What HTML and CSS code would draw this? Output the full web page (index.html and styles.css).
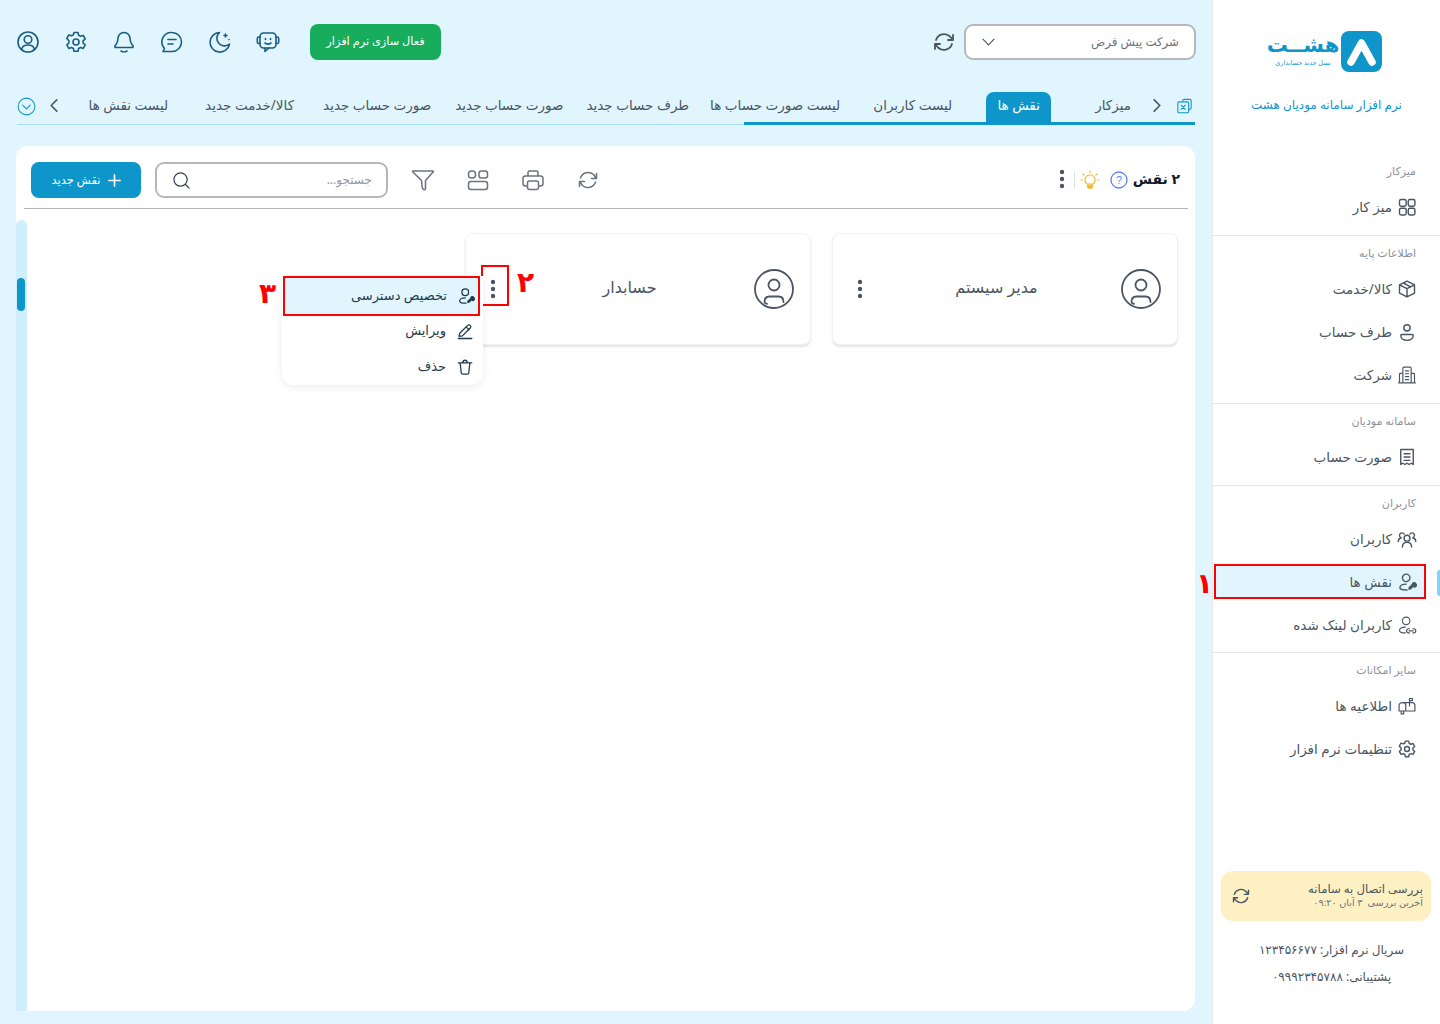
FILE: index.html
```html
<!DOCTYPE html>
<html lang="fa" dir="rtl">
<head>
<meta charset="utf-8">
<title>نرم افزار سامانه مودیان هشت</title>
<link rel="stylesheet" href="styles.css">
</head>
<body>
<svg class="defs" width="0" height="0" aria-hidden="true">
  <defs>
    <symbol id="i-refresh" viewBox="0 0 24 24"><path d="M21 5v5h-5M3 19v-5h5M4 10a8.500 8.500 0 0 1 14-3.500L21 10M20 14a8.500 8.500 0 0 1-14 3.500L3 14"/></symbol>
    <symbol id="i-user-key" viewBox="0 0 24 24"><circle cx="11" cy="7" r="4.500"/><path d="M11 14.500c-4.500 0-7.500 1.800-7.500 4s3 3 7.500 3h1"/><path class="fillc" d="M23 13.500a2.800 2.800 0 0 0-5.300 1l-4 4.200v2.500h2.500l.7-1.200 1.300-.3 1-1.700a2.800 2.800 0 0 0 3.800-4.500z"/></symbol>
    <symbol id="i-kebab" viewBox="0 0 6 20"><circle class="fillc" cx="3" cy="3" r="2.200"/><circle class="fillc" cx="3" cy="10" r="2.200"/><circle class="fillc" cx="3" cy="17" r="2.200"/></symbol>
    <symbol id="i-avatar" viewBox="0 0 40 40"><circle cx="20" cy="20" r="19"/><circle cx="20" cy="16" r="5.500"/><path d="M10.500 33c0-3.500 2-5.500 5-5.500h9c3 0 5 2 5 5.500"/><path d="M11 34l2 .8"/></symbol>
    <symbol id="i-gear" viewBox="0 0 24 24"><circle cx="12" cy="12" r="3"/><path d="M10 2.500h4l.6 2.800 1.900 1 2.700-.9 2 3.500-2.100 1.900v2.200l2.100 1.900-2 3.500-2.700-.9-1.900 1-.6 2.800h-4l-.6-2.800-1.900-1-2.700.9-2-3.500 2.100-1.900v-2.200L2.800 8.400l2-3.500 2.700.9 1.900-1z" stroke-linejoin="round"/></symbol>
  </defs>
</svg>
<div class="app">
  <aside class="sidebar">
    <div class="brand">
      <div class="logo">
        <svg class="logo-mark" viewBox="0 0 41 41"><rect width="41" height="41" rx="8" fill="#0e96cb"/><path d="M10 31 L20.500 12 L31 31" fill="none" stroke="#fff" stroke-width="7.500" stroke-linecap="round" stroke-linejoin="round"/></svg>
        <div class="logo-words"><span class="logo-name">هشــت</span><span class="logo-tag">نسل جدید حسابداری</span></div>
      </div>
      <p class="brand-title">نرم افزار سامانه مودیان هشت</p>
    </div>
    <nav class="nav">
      <section class="group">
        <h4 class="group-label">میزکار</h4>
        <a class="item"><svg class="ic" viewBox="0 0 24 24"><rect x="3" y="3" width="8" height="8" rx="2"/><rect x="13.500" y="3" width="8" height="8" rx="2"/><rect x="3" y="13.500" width="8" height="8" rx="2"/><rect x="13.500" y="13.500" width="8" height="8" rx="2"/></svg><span>میز کار</span></a>
      </section>
      <section class="group">
        <h4 class="group-label">اطلاعات پایه</h4>
        <a class="item"><svg class="ic" viewBox="0 0 24 24"><path d="M12 2.500l9 4.500v10l-9 4.500-9-4.500V7zM3 7l9 4.500L21 7M12 11.500v10M7.500 4.800l9 4.700"/></svg><span>کالا/خدمت</span></a>
        <a class="item"><svg class="ic" viewBox="0 0 24 24"><circle cx="12" cy="7" r="3.800"/><path d="M5.500 15h13c.5 0 1 .4 1 1 0 3.500-3 6-7.500 6s-7.500-2.500-7.500-6c0-.6.500-1 1-1z"/></svg><span>طرف حساب</span></a>
        <a class="item"><svg class="ic thin" viewBox="0 0 24 24"><path d="M7 21.500V4c0-1 .7-1.500 1.500-1.500h7c.8 0 1.500.5 1.500 1.500v17.500M3 21.500V11c0-.6.400-1 1-1h3M17 10h3c.6 0 1 .4 1 1v10.500M2 21.500h20M10 7h4M10 10.500h4M10 14h4M10 17.500h4"/></svg><span>شرکت</span></a>
      </section>
      <section class="group">
        <h4 class="group-label">سامانه مودیان</h4>
        <a class="item"><svg class="ic" viewBox="0 0 24 24"><path d="M4.500 3h15v18l-2.500-1.500L14.500 21 12 19.500 9.500 21 7 19.500 4.500 21zM8.500 8h7M8.500 12h7M8.500 16h7"/></svg><span>صورت حساب</span></a>
      </section>
      <section class="group short">
        <h4 class="group-label">کاربران</h4>
        <a class="item"><svg class="ic" viewBox="0 0 24 24"><circle cx="12" cy="11" r="3.500"/><path d="M6.500 21.500c0-3.500 2.500-5.500 5.500-5.500s5.500 2 5.500 5.500M8.500 6a3 3 0 1 0-3.500 4.500c-2 .6-3.500 2.200-3.500 4.500M15.500 6A3 3 0 1 1 19 10.500c2 .6 3.500 2.200 3.500 4.500"/></svg><span>کاربران</span></a>
        <a class="item active"><svg class="ic"><use href="#i-user-key"/></svg><span>نقش ها</span><i class="redbox"></i><b class="note note-1">۱</b></a>
        <a class="item"><svg class="ic thin" viewBox="0 0 24 24"><circle cx="11" cy="7" r="4.500"/><path d="M10 14.500c-4 0-7 1.800-7 4s3 3 7 3M15 16.500h-1a2.500 2.500 0 0 0 0 5h1M19 16.500h1a2.500 2.500 0 0 1 0 5h-1M14.500 19h5"/></svg><span>کاربران لینک شده</span></a>
      </section>
      <section class="group last">
        <h4 class="group-label">سایر امکانات</h4>
        <a class="item"><svg class="ic thin" viewBox="0 0 24 24"><path d="M7 8h11c2 0 3.500 1.500 3.500 3.500V18h-19v-6.500C2.500 9.500 4.500 8 7 8zM7 8c2 0 3.500 1.500 3.500 3.500V18M5 18v3.500h3V18M15 12V3h3.500v2.500H15"/></svg><span>اطلاعیه ها</span></a>
        <a class="item"><svg class="ic"><use href="#i-gear"/></svg><span>تنظیمات نرم افزار</span></a>
      </section>
    </nav>
    <div class="side-foot">
      <div class="check">
        <div class="check-text"><strong>بررسی اتصال به سامانه</strong><small>آخرین بررسی&nbsp; ۳ آبان ۰۹:۲۰</small></div>
        <svg class="ic"><use href="#i-refresh"/></svg>
      </div>
      <p class="foot-line">سریال نرم افزار: ۱۲۳۴۵۶۶۷۷</p>
      <p class="foot-line">پشتیبانی: ۰۹۹۹۲۳۴۵۷۸۸</p>
    </div>
  </aside>

  <main class="main">
    <header class="topbar">
      <div class="select"><span>شرکت پیش فرض</span><svg class="chev" viewBox="0 0 14 8"><path d="M1 1l6 6 6-6"/></svg></div>
      <svg class="top-refresh"><use href="#i-refresh"/></svg>
      <div class="top-actions">
        <button class="activate">فعال سازی نرم افزار</button>
        <svg class="tic" viewBox="0 0 24 24"><rect x="4" y="3" width="16" height="15" rx="3.500"/><path d="M4 7H2.800c-.8 0-1.500.7-1.500 1.500v3.500c0 .8.700 1.500 1.500 1.500H4M20 7h1.200c.8 0 1.500.7 1.500 1.500v3.500c0 .8-.7 1.500-1.500 1.500H20M9 18v3.500l4-3.500M9 13c1.700 1.300 4.300 1.300 6 0M9.500 8.500v1M14.500 8.500v1"/></svg>
        <svg class="tic" viewBox="0 0 24 24"><path d="M11.500 2.500A9.800 9.800 0 1 0 21.500 14a7.500 7.500 0 0 1-10-11.500zM17.500 4v3M16 5.500h3M21 9.500v.1"/></svg>
        <svg class="tic" viewBox="0 0 24 24"><path d="M12 2.500a9.500 9.500 0 0 1 0 19H3l1.500-3A9.500 9.500 0 0 1 12 2.500zM8 9.500h8M8 14h5"/></svg>
        <svg class="tic" viewBox="0 0 24 24"><path d="M12 2.500c-3.500 0-6 2.700-6 6 0 4-1.500 5.500-3 7.500-.5.700 0 1.500 1 1.500h16c1 0 1.500-.8 1-1.500-1.500-2-3-3.500-3-7.500 0-3.300-2.500-6-6-6zM9 21c1.500 1 4.500 1 6 0"/></svg>
        <svg class="tic"><use href="#i-gear"/></svg>
        <svg class="tic" viewBox="0 0 24 24"><circle cx="12" cy="12" r="10"/><circle cx="12" cy="9.500" r="3.800"/><path d="M5.500 19.500c.5-3 3-4.500 6.500-4.500s6 1.500 6.500 4.500"/></svg>
      </div>
    </header>

    <div class="tabs">
      <svg class="excel" viewBox="0 0 18 18"><path d="M7 3V2.500C7 1.700 7.700 1 8.500 1h7c.8 0 1.500.7 1.500 1.500v9c0 .8-.7 1.500-1.500 1.500H15"/><rect x="1" y="4" width="13" height="13" rx="1.500"/><path d="M5 8l5 5M10 8l-5 5"/></svg>
      <svg class="tab-chev" viewBox="0 0 8 14"><path d="M1 1l6 6-6 6"/></svg>
      <a class="tab t1">میزکار</a>
      <a class="tab on t2">نقش ها</a>
      <a class="tab t3">لیست کاربران</a>
      <a class="tab t4">لیست صورت حساب ها</a>
      <a class="tab t5">طرف حساب جدید</a>
      <a class="tab t6">صورت حساب جدید</a>
      <a class="tab t7">صورت حساب جدید</a>
      <a class="tab t8">کالا/خدمت جدید</a>
      <a class="tab t9">لیست نقش ها</a>
      <svg class="tab-chev left" viewBox="0 0 8 14"><path d="M7 1L1 7l6 6"/></svg>
      <svg class="tab-more" viewBox="0 0 20 20"><circle cx="10" cy="10" r="8.800"/><path d="M6 8.500l4 4 4-4"/></svg>
    </div>

    <section class="panel">
      <div class="toolbar">
        <strong class="count">۲ نقش</strong>
        <svg class="help" viewBox="0 0 18 18"><circle cx="9" cy="9" r="8"/><text x="9" y="13" text-anchor="middle">?</text></svg>
        <svg class="bulb" viewBox="0 0 20 20"><path d="M10 1v1.500M3 4l1.200 1.200M17 4l-1.200 1.200M1 10h1.500M17.500 10H19"/><path d="M10 5a5 5 0 0 0-3 9h6a5 5 0 0 0-3-9z"/><path class="solid" d="M7 14.500h6v2c0 1.500-1.500 2.500-3 2.500s-3-1-3-2.500z"/></svg>
        <i class="tool-sep"></i>
        <svg class="kebab dark"><use href="#i-kebab"/></svg>
        <div class="tools">
          <svg class="tool" viewBox="0 0 24 24"><path d="M20.500 5.500v5h-5M3.500 18.500v-5h5M4.500 10a8 8 0 0 1 13-3.500l3 4M19.500 14a8 8 0 0 1-13 3.500l-3-4"/></svg>
          <svg class="tool" viewBox="0 0 24 24"><path d="M7 8V4.500C7 3.500 7.800 3 8.500 3h7c.8 0 1.500.5 1.500 1.500V8M6 18H4.500C3 18 2 17 2 15.500v-5C2 9 3 8 4.500 8h15c1.500 0 2.500 1 2.500 2.500v5c0 1.500-1 2.500-2.500 2.500H18"/><rect x="6.500" y="13" width="11" height="8.500" rx="2"/></svg>
          <svg class="tool" viewBox="0 0 24 24"><rect x="2.500" y="3" width="7" height="7" rx="3"/><rect x="13" y="3" width="8.500" height="7" rx="2.500"/><rect x="2.500" y="13.500" width="19" height="8" rx="2.500"/></svg>
          <svg class="tool" viewBox="0 0 24 24"><path d="M2 3h20c.4 0 .6.500.3.800L14.500 12.500v8c0 1-1 1.500-1.800 1-.5-.3-1.500-1-1.500-2l-.7-7L1.700 3.800C1.400 3.500 1.600 3 2 3z"/></svg>
        </div>
        <div class="search"><span>جستجو...</span><svg viewBox="0 0 20 20"><circle cx="9" cy="9" r="7"/><path d="M14 14l4 4"/></svg></div>
        <button class="add"><svg viewBox="0 0 14 14"><path d="M7 1v12M1 7h12"/></svg><span>نقش جدید</span></button>
      </div>
      <div class="content">
        <div class="cards">
          <article class="card">
            <svg class="avatar"><use href="#i-avatar"/></svg>
            <h3>مدیر سیستم</h3>
            <svg class="kebab"><use href="#i-kebab"/></svg>
          </article>
          <article class="card">
            <svg class="avatar"><use href="#i-avatar"/></svg>
            <h3>حسابدار</h3>
            <svg class="kebab"><use href="#i-kebab"/></svg>
            <i class="redbox kebab-box"></i>
            <b class="note note-2">۲</b>
            <ul class="menu">
              <li class="menu-item sel"><svg class="ic"><use href="#i-user-key"/></svg><span>تخصیص دسترسی</span><i class="redbox"></i><b class="note note-3">۳</b></li>
              <li class="menu-item"><svg class="ic" viewBox="0 0 24 24"><path d="M5 15L15.500 4.500c1-1 2.500-1 3.500 0s1 2.500 0 3.500L8.500 18.500l-4.500.5zM13.500 6.500l4 4M3 22h18"/></svg><span>ویرایش</span></li>
              <li class="menu-item"><svg class="ic" viewBox="0 0 24 24"><path d="M3 6.500h18M9 6.500c0-2 1.300-3.500 3-3.500s3 1.500 3 3.500M5.500 6.500L7 20c.1 1 1 1.500 2 1.500h6c1 0 1.900-.5 2-1.500l1.500-13.500"/></svg><span>حذف</span></li>
            </ul>
          </article>
        </div>
        <div class="scroll"><i class="thumb"></i></div>
      </div>
    </section>
  </main>
</div>
</body>
</html>
```

FILE: styles.css
```css
* { box-sizing: border-box; }
html, body { margin: 0; height: 100%; }
body {
  font-family: "Noto Sans", "DejaVu Sans", sans-serif;
  color: #4b5563;
  background: #e0f5fe;
  overflow: hidden;
}
p, h3, h4, ul { margin: 0; padding: 0; }
button { font-family: inherit; border: 0; }
i { font-style: normal; display: block; }
svg { fill: none; stroke: currentColor; stroke-linecap: round; stroke-linejoin: round; stroke-width: 1.7; flex: none; }
.fillc { fill: currentColor; stroke: none; }
.defs { position: absolute; }

.app { display: flex; height: 1024px; }

/* sidebar */
.sidebar {
  width: 228px;
  flex: none;
  height: 1024px;
  background: #fff;
  border-left: 1px solid #e5e7eb;
  display: flex;
  flex-direction: column;
  position: relative;
}
.brand { padding-top: 31px; }
.logo { display: flex; justify-content: center; gap: 4px; height: 41px; padding-right: 2px; }
.logo-mark { width: 41px; height: 41px; stroke: none; }
.logo-words { display: flex; flex-direction: column; align-items: center; width: 68px; color: #0e96cb; }
.logo-name { font-size: 21px; font-weight: 700; line-height: 27px; height: 27px; white-space: nowrap; }
.logo-tag { font-size: 6.500px; line-height: 10px; white-space: nowrap; }
.brand-title { margin-top: 25px; height: 16px; line-height: 16px; font-size: 12px; text-align: center; color: #0e96cb; }
.nav { margin-top: 41px; }
.group { padding: 9px 0 12px; border-bottom: 1px solid #e5e7eb; display: flex; flex-direction: column; gap: 11px; }
.group.short { padding-bottom: 11px; }
.group.last { border-bottom: 0; }
.group-label { font-size: 11px; font-weight: 400; line-height: 16px; height: 16px; color: #8b929c; padding-right: 24px; margin-bottom: 1px; }
.item { position: relative; height: 32px; margin: 0 15px 0 2px; padding-right: 8px; display: flex; align-items: center; gap: 5px; font-size: 13.500px; color: #4b5563; white-space: nowrap; }
.ic { width: 20px; height: 20px; color: #4b5563; }
.ic.thin { stroke-width: 1.400; }
.item.active { background: #e0f5fe; }
.item.active::after { content: ""; position: absolute; left: 222px; top: 4px; width: 3px; height: 26px; background: #7dd3fc; border-radius: 3px 0 0 3px; }
.redbox { position: absolute; inset: -2px -1px -1px; border: 2px solid #f00; pointer-events: none; }
.note { position: absolute; color: #f00; font-weight: 700; font-size: 28px; line-height: 30px; }
.note-1 { right: 212px; top: 1px; }
.note-2 { right: 276px; top: 32px; }
.note-3 { right: 204px; top: 1px; }

.side-foot { margin-top: auto; padding: 0 9px 34px 8px; }
.check { height: 50px; margin-bottom: 15px; background: #fdf1c4; border-radius: 12px; padding: 0 8px 3px 10px; display: flex; align-items: center; justify-content: space-between; }
.check .ic { margin-top: 3px; }
.check-text { display: flex; flex-direction: column; }
.check-text strong { font-size: 11.700px; font-weight: 400; line-height: 16px; color: #4b5563; }
.check-text small { font-size: 9.700px; line-height: 14px; color: #6b7280; }
.foot-line { height: 27px; line-height: 27px; padding-left: 11px; font-size: 12px; text-align: center; color: #4b5563; }

/* main */
.main { flex: 1; min-width: 0; display: flex; flex-direction: column; padding: 24px 16px 13px 16px; }
.topbar { display: flex; align-items: center; height: 36px; gap: 8px; }
.select { width: 232px; height: 36px; background: #fff; border: 2px solid #b4b8be; border-radius: 9px; padding: 0 15px 3px; display: flex; align-items: center; justify-content: space-between; font-size: 11.800px; color: #6b7280; }
.chev { width: 13px; height: 8px; stroke-width: 1.200; color: #4b5563; margin: 3px 0 0 1px; }
.top-refresh { width: 24px; height: 24px; color: #4b5563; stroke-width: 1.800; }
.top-actions { margin-right: auto; display: flex; align-items: center; gap: 24px; }
.activate { width: 131px; height: 36px; margin-left: 6px; padding: 0 0 3px; background: #17ad5c; color: #fff; border-radius: 8px; font-size: 11.300px; font-weight: 400; }
.tic { width: 24px; height: 24px; color: #1b5e80; stroke-width: 1.600; }

.tabs { position: relative; margin: 32px 1px 0 1px; height: 33px; display: flex; align-items: flex-end; border-bottom: 1px solid #a9dcf5; font-size: 13.500px; }
.tabs::after { content: ""; position: absolute; right: 0; bottom: -1px; width: 451px; height: 3px; background: #0e96cb; }
.excel { width: 15px; height: 16px; color: #0e96cb; position: absolute; right: 3px; top: 6px; stroke-width: 1.300; }
.tab-chev { width: 8px; height: 13px; color: #4b5563; position: absolute; right: 34px; top: 7px; }
.tab-chev.left { right: auto; left: 33px; }
.tab-more { position: absolute; left: 0; top: 5px; width: 19px; height: 19px; color: #0e96cb; stroke-width: 1.100; }
.tab { height: 30px; line-height: 26px; white-space: nowrap; position: relative; z-index: 1; color: #4b5563; padding: 0 8px; margin-bottom: 2px; }
.tab.on { background: #0e96cb; color: #fff; border-radius: 8px 8px 0 0; width: 65px; text-align: center; padding: 0; }
.t1 { margin-right: 56px; }
.t2 { margin-right: 36px; }
.t3 { margin-right: 26px; }
.t4 { margin-right: 17px; }
.t5 { margin-right: 5px; }
.t6 { margin-right: 7px; }
.t7 { margin-right: 8px; }
.t8 { margin-right: 13px; }
.t9 { margin-right: 21px; }

.panel { flex: 1; min-height: 0; margin: 21px 1px 0 0; background: #fff; border-radius: 12px; display: flex; flex-direction: column; }
.toolbar { height: 63px; flex: none; margin: 0 7px 0 8px; padding: 16px 8px 0 7px; display: flex; align-items: flex-start; border-bottom: 1px solid #b1b3b6; }
.count { font-size: 14px; line-height: 34px; color: #111827; font-weight: 700; white-space: nowrap; }
.help { width: 18px; height: 18px; margin: 9px 5px 0 0; color: #5b84f5; stroke-width: 1.300; }
.help text { font-family: "Liberation Sans", sans-serif; font-size: 11px; fill: currentColor; stroke: none; }
.bulb { width: 20px; height: 20px; margin: 8px 10px 0 0; color: #f4b92f; stroke-width: 1.200; }
.bulb .solid { fill: currentColor; stroke: none; }
.tool-sep { width: 1px; height: 18px; background: #e0e2e5; margin: 9px 5px 0 0; }
.kebab { width: 6px; height: 20px; color: #4b5563; }
.kebab.dark { margin: 7px 9px 0 0; }
.tools { margin-right: auto; display: flex; gap: 31px; margin-top: 6px; color: #6b7280; }
.tool { width: 24px; height: 24px; stroke-width: 1.500; }
.search { width: 233px; height: 36px; margin: 0 23px 0 14px; border: 2px solid #b4b8be; border-radius: 9px; display: flex; align-items: center; justify-content: space-between; padding: 0 14px 2px 15px; font-size: 12px; color: #9098a2; }
.search svg { width: 19px; height: 19px; color: #374151; stroke-width: 1.300; margin-top: 2px; }
.add { width: 110px; height: 36px; padding: 0 0 2px; background: #0e96cb; color: #fff; border-radius: 8px; display: flex; align-items: center; justify-content: center; gap: 7px; font-size: 11.500px; font-weight: 400; }
.add svg { width: 13px; height: 13px; stroke-width: 1.800; margin-top: 2px; }

.content { flex: 1; min-height: 0; position: relative; display: flex; justify-content: space-between; }
.cards { display: grid; grid-template-columns: 346px 346px; gap: 21px; padding: 24px 17px 0 0; align-content: start; }
.card { position: relative; height: 112px; border-radius: 8px; background: #fff; border: 1px solid #f0f1f3; box-shadow: 0 2px 2px rgba(0, 0, 0, .1); display: flex; align-items: center; justify-content: space-between; padding: 0 16px 0 24px; }
.card h3 { font-size: 16px; font-weight: 400; color: #4b5563; flex: 1; text-align: center; padding: 0 0 5px 9px; }
.avatar { width: 40px; height: 40px; color: #4b5563; stroke-width: 1.800; }
.kebab-box { inset: 31px auto auto 15px; width: 28px; height: 41px; }
.menu { list-style: none; position: absolute; z-index: 5; left: -184px; top: 42px; width: 201px; background: #fff; border-radius: 0 0 12px 12px; box-shadow: 0 2px 8px rgba(0, 0, 0, .08); }
.menu-item { position: relative; height: 36px; display: flex; align-items: center; gap: 10px; padding: 0 9px 2px; font-size: 13px; color: #1f3b4d; white-space: nowrap; }
.menu-item .ic { color: #1f3b4d; width: 18px; height: 18px; margin-top: 2px; }
.menu-item.sel { height: 40px; margin: 0 3px -3px 1px; background: #e0f5fe; padding-right: 5px; }
.menu-item.sel .redbox { inset: 0; }
.scroll { width: 11px; margin: 11px 0 0 0; border-radius: 8px 8px 0 0; background: #d0effe; position: relative; }
.thumb { position: absolute; left: 1px; right: 2px; top: 58px; height: 33px; background: #0e96cb; border-radius: 5px; }
```
